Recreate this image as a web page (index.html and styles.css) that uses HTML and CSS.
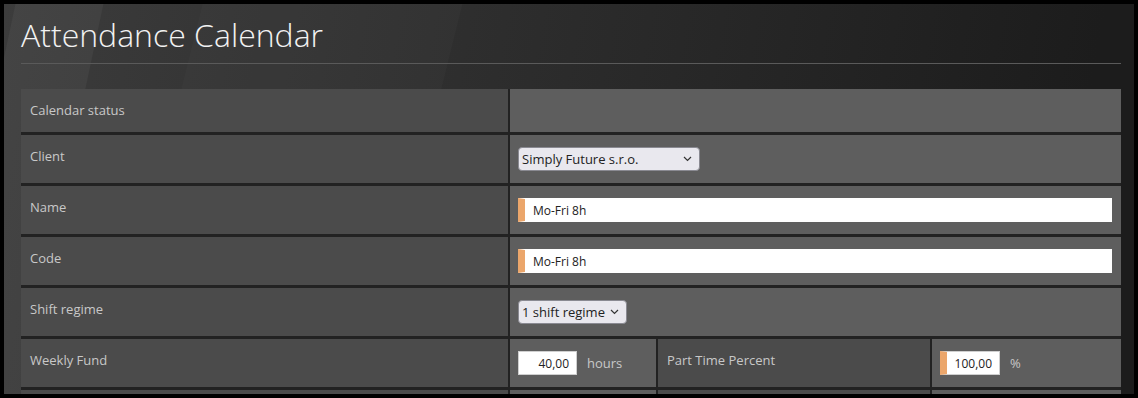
FILE: index.html
```html
<!DOCTYPE html>
<html lang="en">
<head>
    <meta charset="UTF-8">
    <title>Attendance Calendar</title>
    <link rel="stylesheet" href="styles.css">
</head>
<body>
    <div class="frame">
        <h1 class="title">Attendance Calendar</h1>

        <div class="form">
            <div class="row row-short">
                <div class="label">Calendar status</div>
                <div class="value"></div>
            </div>

            <div class="row">
                <div class="label">Client</div>
                <div class="value">
                    <span class="select-wrap">
                        <select class="select select-client">
                            <option>Simply Future s.r.o.</option>
                        </select>
                        <svg class="chevron" width="9" height="6" viewBox="0 0 9 6"><path d="M1 1 L4.5 4.5 L8 1" fill="none" stroke="#333" stroke-width="1.2"/></svg>
                    </span>
                </div>
            </div>

            <div class="row">
                <div class="label">Name</div>
                <div class="value">
                    <input class="text required" type="text" value="Mo-Fri 8h">
                </div>
            </div>

            <div class="row">
                <div class="label">Code</div>
                <div class="value">
                    <input class="text required" type="text" value="Mo-Fri 8h">
                </div>
            </div>

            <div class="row">
                <div class="label">Shift regime</div>
                <div class="value">
                    <span class="select-wrap">
                        <select class="select select-shift">
                            <option>1 shift regime</option>
                        </select>
                        <svg class="chevron" width="9" height="6" viewBox="0 0 9 6"><path d="M1 1 L4.5 4.5 L8 1" fill="none" stroke="#333" stroke-width="1.2"/></svg>
                    </span>
                </div>
            </div>

            <div class="row">
                <div class="label">Weekly Fund</div>
                <div class="split">
                    <div class="value">
                        <input class="num" type="text" value="40,00">
                        <span class="unit">hours</span>
                    </div>
                    <div class="label">Part Time Percent</div>
                    <div class="value">
                        <input class="num num-pct required" type="text" value="100,00">
                        <span class="unit">%</span>
                    </div>
                </div>
            </div>

            <div class="row">
                <div class="label"></div>
                <div class="split">
                    <div class="value"></div>
                    <div class="label"></div>
                    <div class="value"></div>
                </div>
            </div>
        </div>
    </div>
</body>
</html>
```

FILE: styles.css
```css
html, body {
    margin: 0;
    height: 100%;
    background: #000;
    overflow: hidden;
}

body {
    padding: 4px;
    box-sizing: border-box;
    font-family: "Open Sans", "Liberation Sans", sans-serif;
}

.frame {
    position: relative;
    height: 100%;
    overflow: hidden;
    padding: 0 13px 0 17px;
    background: linear-gradient(100deg, #3c3c3c 0%, #313131 30%, #272727 60%, #1c1c1c 92%);
}

/* diagonal wallpaper shapes */
.frame::before {
    content: "";
    position: absolute;
    left: -30px;
    top: 0;
    width: 88px;
    height: 100%;
    background: rgba(255, 255, 255, 0.045);
    transform: skewX(-12deg);
}

.frame::after {
    content: "";
    position: absolute;
    left: 150px;
    top: 0;
    width: 260px;
    height: 100%;
    background: rgba(255, 255, 255, 0.02);
    transform: skewX(-14deg);
}

.title {
    position: relative;
    z-index: 1;
    margin: 0;
    padding: 12px 0 10px 0;
    font-weight: 300;
    font-size: 32px;
    line-height: 37px;
    color: #f2f2f2;
    border-bottom: 1px solid #5a5a5a;
}

.form {
    position: relative;
    z-index: 1;
    margin-top: 25px;
    display: flex;
    flex-direction: column;
    gap: 3px;
    background: #222;
}

.row {
    display: grid;
    grid-template-columns: 487px 1fr;
    gap: 2px;
    height: 48px;
}

.row-short {
    height: 43px;
}

.label {
    background: #4b4b4b;
    color: #c8c8c8;
    font-size: 13px;
    line-height: 17px;
    padding: 13px 9px 0 9px;
}

.value {
    background: #5e5e5e;
    display: flex;
    align-items: center;
    padding: 0 9px 0 8px;
    color: #c8c8c8;
    font-size: 13px;
}

.split {
    display: grid;
    grid-template-columns: 146px 272px 1fr;
    gap: 2px;
    background: #222;
}

.select-wrap {
    position: relative;
    display: inline-flex;
}

.select {
    appearance: none;
    -webkit-appearance: none;
    height: 24px;
    box-sizing: border-box;
    border: 1px solid #8a8a92;
    border-radius: 4px;
    background: #e9e8ee;
    color: #222;
    font-family: "Open Sans", "Liberation Sans", sans-serif;
    font-size: 13px;
    padding: 0 20px 0 3px;
}

.select-client {
    width: 182px;
}

.select-shift {
    width: 109px;
}

.chevron {
    position: absolute;
    right: 8px;
    top: 9px;
    pointer-events: none;
}

.text {
    flex: 1;
    height: 24px;
    box-sizing: border-box;
    border: 1px solid #fff;
    background: #fff;
    color: #222;
    font-family: "Open Sans", "Liberation Sans", sans-serif;
    font-size: 12px;
    padding: 0 0 0 8px;
    outline: none;
}

.required {
    border-left: 7px solid #eba66b;
}

.num {
    width: 59px;
    height: 24px;
    box-sizing: border-box;
    border: 1px solid #cfcfcf;
    background: #fff;
    color: #222;
    font-family: "Open Sans", "Liberation Sans", sans-serif;
    font-size: 12px;
    text-align: right;
    padding: 0 7px 0 0;
    outline: none;
}

.num-pct {
    width: 60px;
    border-left: 7px solid #eba66b;
}

.unit {
    margin-left: 10px;
    color: #c8c8c8;
}
```
